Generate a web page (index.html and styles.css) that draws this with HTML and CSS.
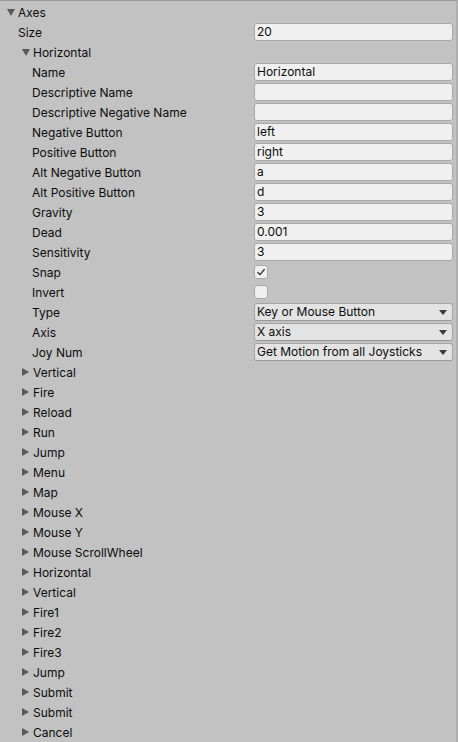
FILE: index.html
```html
<!DOCTYPE html>
<html>
<head>
<meta charset="utf-8">
<link rel="stylesheet" href="styles.css">
</head>
<body>
<div class="panel">
  <div class="row"><div class="label l0"><span class="tri down"></span>Axes</div></div>
  <div class="row"><div class="label l1">Size</div><div class="field"><span class="input">20</span></div></div>
  <div class="row"><div class="label l1f"><span class="tri down"></span>Horizontal</div></div>
  <div class="row"><div class="label l2">Name</div><div class="field"><span class="input">Horizontal</span></div></div>
  <div class="row"><div class="label l2">Descriptive Name</div><div class="field"><span class="input"></span></div></div>
  <div class="row"><div class="label l2">Descriptive Negative Name</div><div class="field"><span class="input"></span></div></div>
  <div class="row"><div class="label l2">Negative Button</div><div class="field"><span class="input">left</span></div></div>
  <div class="row"><div class="label l2">Positive Button</div><div class="field"><span class="input">right</span></div></div>
  <div class="row"><div class="label l2">Alt Negative Button</div><div class="field"><span class="input">a</span></div></div>
  <div class="row"><div class="label l2">Alt Positive Button</div><div class="field"><span class="input">d</span></div></div>
  <div class="row"><div class="label l2">Gravity</div><div class="field"><span class="input">3</span></div></div>
  <div class="row"><div class="label l2">Dead</div><div class="field"><span class="input">0.001</span></div></div>
  <div class="row"><div class="label l2">Sensitivity</div><div class="field"><span class="input">3</span></div></div>
  <div class="row"><div class="label l2">Snap</div><div class="field"><span class="check"><svg width="10" height="10" viewBox="0 0 10 10"><path d="M1.5 5.2 L4 7.6 L8.6 2.2" fill="none" stroke="#222" stroke-width="1.3"/></svg></span></div></div>
  <div class="row"><div class="label l2">Invert</div><div class="field"><span class="check"></span></div></div>
  <div class="row"><div class="label l2">Type</div><div class="field"><span class="select">Key or Mouse Button<span class="arrow"></span></span></div></div>
  <div class="row"><div class="label l2">Axis</div><div class="field"><span class="select">X axis<span class="arrow"></span></span></div></div>
  <div class="row"><div class="label l2">Joy Num</div><div class="field"><span class="select">Get Motion from all Joysticks<span class="arrow"></span></span></div></div>
  <div class="row"><div class="label l1f"><span class="tri right"></span>Vertical</div></div>
  <div class="row"><div class="label l1f"><span class="tri right"></span>Fire</div></div>
  <div class="row"><div class="label l1f"><span class="tri right"></span>Reload</div></div>
  <div class="row"><div class="label l1f"><span class="tri right"></span>Run</div></div>
  <div class="row"><div class="label l1f"><span class="tri right"></span>Jump</div></div>
  <div class="row"><div class="label l1f"><span class="tri right"></span>Menu</div></div>
  <div class="row"><div class="label l1f"><span class="tri right"></span>Map</div></div>
  <div class="row"><div class="label l1f"><span class="tri right"></span>Mouse X</div></div>
  <div class="row"><div class="label l1f"><span class="tri right"></span>Mouse Y</div></div>
  <div class="row"><div class="label l1f"><span class="tri right"></span>Mouse ScrollWheel</div></div>
  <div class="row"><div class="label l1f"><span class="tri right"></span>Horizontal</div></div>
  <div class="row"><div class="label l1f"><span class="tri right"></span>Vertical</div></div>
  <div class="row"><div class="label l1f"><span class="tri right"></span>Fire1</div></div>
  <div class="row"><div class="label l1f"><span class="tri right"></span>Fire2</div></div>
  <div class="row"><div class="label l1f"><span class="tri right"></span>Fire3</div></div>
  <div class="row"><div class="label l1f"><span class="tri right"></span>Jump</div></div>
  <div class="row"><div class="label l1f"><span class="tri right"></span>Submit</div></div>
  <div class="row"><div class="label l1f"><span class="tri right"></span>Submit</div></div>
  <div class="row"><div class="label l1f"><span class="tri right"></span>Cancel</div></div>
</div>
</body>
</html>
```

FILE: styles.css
```css
html, body {
  margin: 0;
  padding: 0;
  background: #c2c2c2;
  width: 458px;
  height: 742px;
  overflow: hidden;
}
.panel {
  box-sizing: border-box;
  width: 458px;
  height: 742px;
  border-top: 1px solid #9a9a9a;
  border-right: 2px solid #b0b0b0;
  padding-top: 1px;
  font-family: Inter, "Noto Sans", sans-serif;
  font-size: 12px;
  color: #0c0c0c;
}
.row {
  display: flex;
  align-items: center;
  height: 20px;
}
.label {
  box-sizing: border-box;
  width: 254px;
  flex: none;
  display: flex;
  align-items: center;
  white-space: nowrap;
}
.l0 { padding-left: 6px; }
.l1 { padding-left: 18px; }
.l1f { padding-left: 21px; }
.l2 { padding-left: 32px; }
.tri {
  display: inline-block;
  width: 12px;
  height: 10px;
  position: relative;
  flex: none;
}
.tri::before {
  content: "";
  position: absolute;
  width: 0;
  height: 0;
}
.tri.down::before {
  left: 1px;
  top: 2px;
  border-left: 4px solid transparent;
  border-right: 4px solid transparent;
  border-top: 7px solid #5a5a5a;
}
.tri.right::before {
  left: 1px;
  top: 1px;
  border-top: 4px solid transparent;
  border-bottom: 4px solid transparent;
  border-left: 7px solid #5a5a5a;
}
.field {
  width: 199px;
  flex: none;
  display: flex;
  align-items: center;
}
.input {
  box-sizing: border-box;
  width: 199px;
  height: 18px;
  background: #f0f0f0;
  border: 1px solid #a8a8a8;
  border-radius: 3px;
  padding: 0 0 0 2px;
  line-height: 16px;
  white-space: nowrap;
}
.select {
  box-sizing: border-box;
  position: relative;
  width: 199px;
  height: 18px;
  background: #e3e3e3;
  border: 1px solid #a5a5a5;
  border-bottom-color: #999;
  border-radius: 3px;
  padding: 0 0 0 2px;
  line-height: 16px;
  white-space: nowrap;
}
.arrow {
  position: absolute;
  right: 5px;
  top: 6px;
  width: 0;
  height: 0;
  border-left: 4px solid transparent;
  border-right: 4px solid transparent;
  border-top: 5px solid #3a3a3a;
}
.check {
  box-sizing: border-box;
  width: 14px;
  height: 14px;
  background: #f0f0f0;
  border: 1px solid #a8a8a8;
  border-radius: 3px;
  display: flex;
  align-items: center;
  justify-content: center;
}
```
